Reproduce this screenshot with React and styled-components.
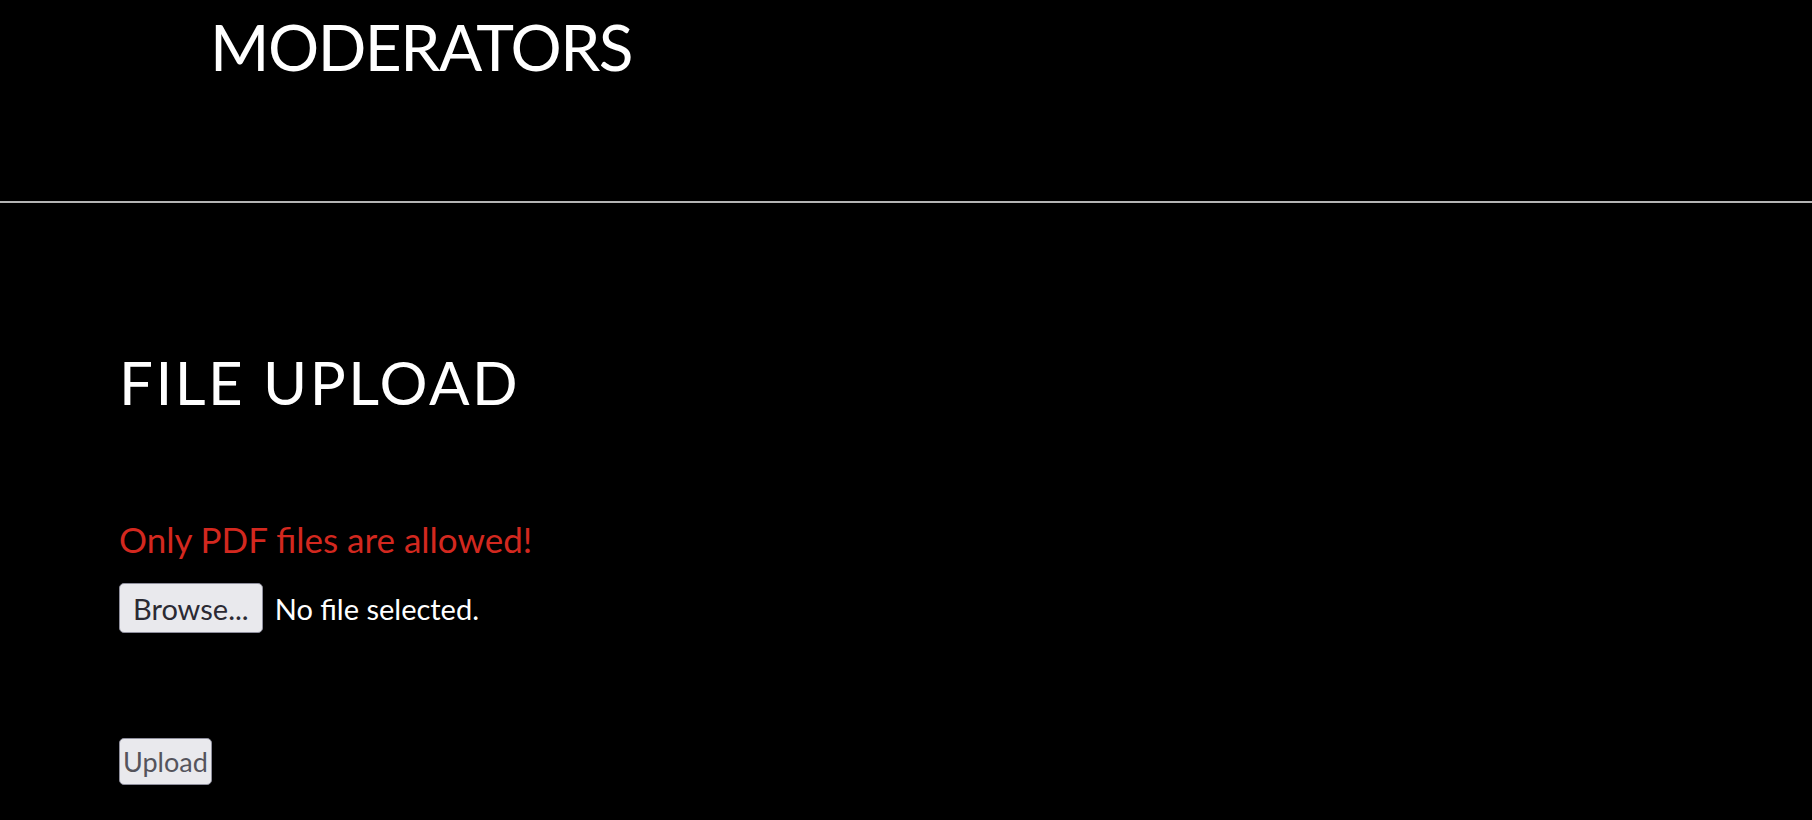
import React from 'react'
import styled, { createGlobalStyle } from 'styled-components'

const GlobalStyle = createGlobalStyle`
  html, body {
    margin: 0;
    padding: 0;
    background: #000;
  }
  body {
    color: #fff;
    font-family: Lato, "Open Sans", sans-serif;
  }
`

const Page = styled.div`
  min-height: 820px;
  background: #000;
`

const Header = styled.header`
  height: 203px;
  padding: 15px 0 0 210px;
  box-sizing: border-box;
  border-bottom: 2px solid #b4b4b4;
`

const SiteTitle = styled.h1`
  margin: 0;
  font-size: 64px;
  font-weight: 400;
  letter-spacing: -1.5px;
  line-height: 1;
  color: #fff;
`

const Main = styled.main`
  padding: 149px 0 0 119px;
`

const SectionTitle = styled.h2`
  margin: 0;
  font-size: 60px;
  font-weight: 400;
  letter-spacing: 2.5px;
  line-height: 1;
`

const ErrorText = styled.p`
  margin: 110px 0 0;
  font-size: 35px;
  line-height: 1;
  color: #d3281f;
`

const FileRow = styled.div`
  display: flex;
  align-items: center;
  gap: 12px;
  margin-top: 26px;
`

const FormButton = styled.button`
  font-family: inherit;
  font-size: ${p => (p.$small ? '27px' : '29px')};
  height: ${p => (p.$small ? '47px' : '50px')};
  padding: 0 ${p => (p.$small ? '3px' : '13px')};
  background: #e9e9ed;
  color: ${p => (p.$small ? '#55545c' : '#2b2a33')};
  border: 1px solid #8f8f9d;
  border-radius: 5px;
  line-height: 1;
  cursor: pointer;
`

const FileName = styled.span`
  font-size: 29px;
  color: #fff;
`

const UploadRow = styled.div`
  margin-top: 105px;
`

export default function App() {
  return (
    <Page>
      <GlobalStyle />
      <Header>
        <SiteTitle>MODERATORS</SiteTitle>
      </Header>
      <Main>
        <SectionTitle>FILE UPLOAD</SectionTitle>
        <ErrorText>Only PDF files are allowed!</ErrorText>
        <FileRow>
          <FormButton type="button">Browse...</FormButton>
          <FileName>No file selected.</FileName>
        </FileRow>
        <UploadRow>
          <FormButton type="button" $small>Upload</FormButton>
        </UploadRow>
      </Main>
    </Page>
  )
}
